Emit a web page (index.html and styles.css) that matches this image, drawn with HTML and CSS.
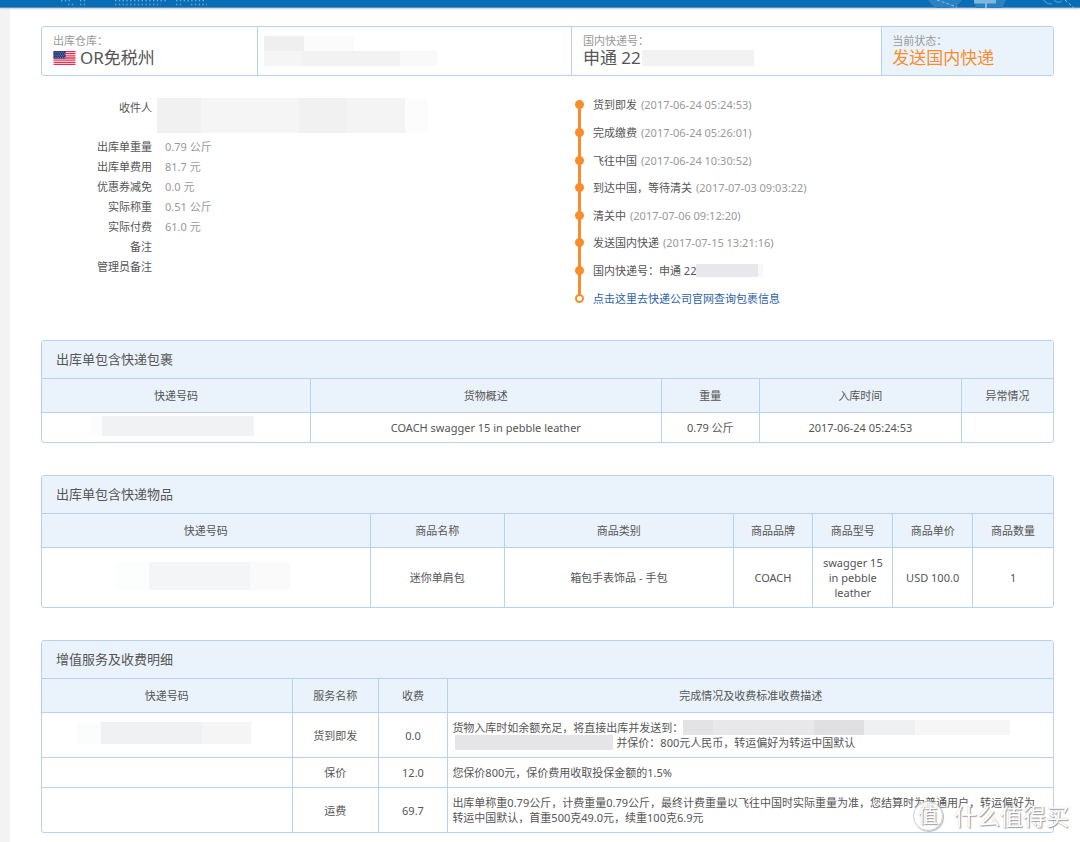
FILE: index.html
```html
<!DOCTYPE html>
<html lang="zh-CN">
<head>
<meta charset="utf-8">
<meta name="viewport" content="width=device-width, initial-scale=1">
<title>出库单详情</title>
<link rel="stylesheet" href="styles.css">
</head>
<body>
<header class="topbar">
  <svg class="topbar-dots" viewBox="0 0 160 8" aria-hidden="true">
    <g fill="none" stroke="#5fa6d8" stroke-width="1.4" stroke-dasharray="1.4 2.4">
      <path d="M1 .8H12M20 .8H26M55 .8H106M116 .8H145M8 4.5H15M20 4.5H26M55 4.5H101M116 4.5H122M131 4.5H147"/>
    </g>
  </svg>
  <svg class="topbar-map" viewBox="0 0 160 8" aria-hidden="true">
    <path fill="#2a82c2" d="M8 0H42L37 6 28 8H16L11 4ZM54 0H86L82 8H56Z"/>
    <path fill="#7db7e0" d="M54 0H76V3.500H67V8H65V3.500H54Z"/>
    <path fill="none" stroke="#8fc0e4" stroke-width="1" stroke-dasharray="3 2" d="M17 0 37 7M145 0 154 8"/>
    <path fill="none" stroke="#3f90ca" stroke-width="1.500" d="M124 0Q126 4 132 4M134 0Q138 4 142 1"/>
  </svg>
</header>
<main class="page">
  <section class="summary">
    <div class="summary-cell">
      <span class="summary-label">出库仓库：</span>
      <strong class="summary-value">
        <svg class="flag" viewBox="0 0 22 14" aria-hidden="true">
          <path fill="#fff" d="M0 0H22V14H0Z"/>
          <path stroke="#e0304f" stroke-width="1.300" d="M0 .6H22M0 2.700H22M0 4.900H22M0 7H22M0 9.200H22M0 11.300H22M0 13.400H22"/>
          <path fill="#20387c" d="M0 0H12V7.500H0Z"/>
          <path stroke="#b9c3de" stroke-width=".8" stroke-dasharray=".8 1.400" d="M1 1.200H12M2 3H12M1 4.800H12M2 6.500H12"/>
        </svg>OR免税州
      </strong>
    </div>
    <div class="summary-cell summary-masked">
      <span class="mask mask-user"></span>
      <span class="mask mask-mail"></span>
    </div>
    <div class="summary-cell">
      <span class="summary-label">国内快递号：</span>
      <strong class="summary-value">申通 22<span class="mask mask-tracking"></span></strong>
    </div>
    <div class="summary-cell summary-status">
      <span class="summary-label">当前状态：</span>
      <strong class="summary-value">发送国内快递</strong>
    </div>
  </section>

  <section class="details">
    <dl class="facts">
      <dt class="receiver">收件人</dt><dd class="receiver"><span class="mask mask-receiver"></span></dd>
      <dt>出库单重量</dt><dd>0.79 公斤</dd>
      <dt>出库单费用</dt><dd>81.7 元</dd>
      <dt>优惠券减免</dt><dd>0.0 元</dd>
      <dt>实际称重</dt><dd>0.51 公斤</dd>
      <dt>实际付费</dt><dd>61.0 元</dd>
      <dt>备注</dt><dd></dd>
      <dt>管理员备注</dt><dd></dd>
    </dl>
    <ol class="timeline">
      <li>货到即发 <time>(2017-06-24 05:24:53)</time></li>
      <li>完成缴费 <time>(2017-06-24 05:26:01)</time></li>
      <li>飞往中国 <time>(2017-06-24 10:30:52)</time></li>
      <li>到达中国，等待清关 <time>(2017-07-03 09:03:22)</time></li>
      <li>清关中 <time>(2017-07-06 09:12:20)</time></li>
      <li>发送国内快递 <time>(2017-07-15 13:21:16)</time></li>
      <li>国内快递号：申通 22<span class="mask mask-step"></span></li>
      <li><a href="#">点击这里去快递公司官网查询包裹信息</a></li>
    </ol>
  </section>

  <section class="panel">
    <h2>出库单包含快递包裹</h2>
    <table class="parcels">
      <colgroup><col class="c-code"><col class="c-desc"><col class="c-weight"><col class="c-time"><col></colgroup>
      <thead><tr><th>快递号码</th><th>货物概述</th><th>重量</th><th>入库时间</th><th>异常情况</th></tr></thead>
      <tbody>
        <tr><td class="code"><span class="mask mask-parcel"></span></td><td>COACH swagger 15 in pebble leather</td><td>0.79 公斤</td><td>2017-06-24 05:24:53</td><td></td></tr>
      </tbody>
    </table>
  </section>

  <section class="panel">
    <h2>出库单包含快递物品</h2>
    <table class="items">
      <colgroup><col class="c-code"><col class="c-name"><col class="c-type"><col class="c-small"><col class="c-small"><col class="c-small"><col></colgroup>
      <thead><tr><th>快递号码</th><th>商品名称</th><th>商品类别</th><th>商品品牌</th><th>商品型号</th><th>商品单价</th><th>商品数量</th></tr></thead>
      <tbody>
        <tr><td class="code"><span class="mask mask-item"></span></td><td>迷你单肩包</td><td>箱包手表饰品 - 手包</td><td>COACH</td><td>swagger 15 in pebble leather</td><td>USD 100.0</td><td>1</td></tr>
      </tbody>
    </table>
  </section>

  <section class="panel">
    <h2>增值服务及收费明细</h2>
    <table class="services">
      <colgroup><col class="c-code"><col class="c-name"><col class="c-fee"><col></colgroup>
      <thead><tr><th>快递号码</th><th>服务名称</th><th>收费</th><th>完成情况及收费标准收费描述</th></tr></thead>
      <tbody>
        <tr><td class="code"><span class="mask mask-service"></span></td><td>货到即发</td><td>0.0</td><td class="note">货物入库时如余额充足，将直接出库并发送到：<span class="mask mask-address"></span><br><span class="mask mask-address-end"></span>并保价：800元人民币，转运偏好为转运中国默认</td></tr>
        <tr><td></td><td>保价</td><td>12.0</td><td class="note">您保价800元，保价费用收取投保金额的1.5%</td></tr>
        <tr><td></td><td>运费</td><td>69.7</td><td class="note">出库单称重0.79公斤，计费重量0.79公斤，最终计费重量以飞往中国时实际重量为准，您结算时为普通用户，转运偏好为转运中国默认，首重500克49.0元，续重100克6.9元</td></tr>
      </tbody>
    </table>
  </section>
  <div class="watermark"><span class="watermark-badge">值</span><span>什么值得买</span></div>
</main>
</body>
</html>
```

FILE: styles.css
```css
*, *::before, *::after { box-sizing: border-box; }

body {
  margin: 0;
  min-height: 100vh;
  display: flex;
  flex-direction: column;
  background: #f3f3f3;
  color: #555;
  font: 11px/15px "Noto Sans", "Noto Sans CJK SC", sans-serif;
}

.topbar {
  display: flex;
  justify-content: space-between;
  height: 8px;
  padding-left: 60px;
  background: #096db6;
  border-bottom: 1px solid #5592bd;
  box-shadow: 0 1px 2px #ccc;
  z-index: 1;
}
.topbar svg { width: 160px; height: 8px; }

.page {
  position: relative;
  flex: 1;
  margin-left: 10px;
  padding: 18px 26px 9px 31px;
  background: #fff;
}

.mask { display: block; height: 18px; background: #f2f2f3; }

.summary {
  display: grid;
  grid-template-columns: 215fr 315fr 311fr 172fr;
  min-height: 50px;
  border: 1px solid #b5d3f0;
  border-radius: 3px;
}
.summary-cell {
  display: flex;
  flex-direction: column;
  padding: 7px 11px 4px;
}
.summary-cell + .summary-cell { border-left: 1px solid #b5d3f0; }
.summary-label { line-height: 14px; color: #999; }
.summary-value {
  display: flex;
  align-items: center;
  font-size: 17px;
  font-weight: 400;
  line-height: 20px;
}
.flag { width: 23px; height: 14px; margin-right: 4px; }
.summary-status { background: #eaf3fb; border-radius: 0 2px 2px 0; padding-left: 10px; }
.summary-status .summary-value { color: #fa8c2a; }
.summary .summary-masked { padding: 9px 6px; }
.mask-user { width: 90px; height: 15px; background: linear-gradient(90deg, #efefef 40px, #fbfbfb 40px); }
.mask-mail { width: 173px; height: 15px; background: linear-gradient(90deg, #f5f5f5 38px, #f2f2f2 38px 136px, #f9f9f9 136px); }
.mask-tracking { width: 112px; height: 16px; margin-left: 1px; background: #f2f2f2; }

.details {
  display: grid;
  grid-template-columns: 533fr 480fr;
  height: 221px;
  margin: 15px 0 28px;
}
.facts {
  display: grid;
  grid-template-columns: 111px 1fr;
  grid-template-rows: 39px;
  grid-auto-rows: 20px;
  align-content: start;
  column-gap: 13px;
  margin: 7px 0 0;
  line-height: 20px;
}
.facts dt { text-align: right; }
.facts dd { margin: 0; color: #999; }
.facts dd.receiver { margin-left: -8px; }
.mask-receiver {
  width: 271px;
  height: 35px;
  background: linear-gradient(90deg, #f1f1f1 44px, #f5f5f5 44px 142px, #f1f1f1 142px 190px, #f4f4f4 190px 248px, #fcfcfc 248px);
}

.timeline {
  display: grid;
  grid-auto-rows: 1fr;
  margin: 0;
  padding: 0;
  list-style: none;
}
.timeline li {
  position: relative;
  display: flex;
  align-items: center;
  gap: 4px;
  padding-left: 19px;
}
.timeline li::before {
  content: "";
  position: absolute;
  left: 1px;
  width: 9px;
  height: 9px;
  border: 2px solid #fa8c2a;
  border-radius: 50%;
  background: #fa8c2a;
  z-index: 1;
}
.timeline li:last-child::before { background: #fff; }
.timeline li:not(:last-child)::after {
  content: "";
  position: absolute;
  left: 4px;
  top: 50%;
  width: 3px;
  height: 100%;
  background: #fa8c2a;
}
.timeline time { color: #999; }
.timeline a { color: #2f62a5; text-decoration: none; }
.mask-step { width: 67px; height: 13px; margin-left: -4px; background: linear-gradient(90deg, #e8e8ec 62px, #f8f8f9 62px); }

.panel {
  margin-bottom: 32px;
  border: 1px solid #b5d3f0;
  border-radius: 3px;
  overflow: hidden;
}
.panel:last-of-type { margin-bottom: 0; }
.panel h2 {
  margin: 0;
  padding: 0 14px;
  background: #eaf3fb;
  font-size: 13px;
  font-weight: 400;
  line-height: 37px;
}
table {
  width: 100%;
  table-layout: fixed;
  border-collapse: separate;
  border-spacing: 0;
}
th, td {
  height: 30px;
  padding: 0 6px;
  border-top: 1px solid #b5d3f0;
  font-weight: 400;
  text-align: center;
}
th { height: 34px; background: #eaf3fb; }
th + th, td + td { border-left: 1px solid #b5d3f0; }
td .mask { margin: 0 auto; }
td.code { padding: 0 10px 4px 4px; }

.parcels .c-code { width: 26.5%; }
.parcels .c-desc { width: 34.7%; }
.parcels .c-weight { width: 9.7%; }
.parcels .c-time { width: 20%; }
.items .c-code { width: 32.4%; }
.items .c-name { width: 13.3%; }
.items .c-type { width: 22.6%; }
.items .c-small { width: 7.9%; }
.items td { height: 60px; }
.services .c-code { width: 24.7%; }
.services .c-name { width: 8.5%; }
.services .c-fee { width: 6.9%; }
.services .note { padding: 7px 14px 7px 4px; text-align: left; }

.mask-parcel { width: 163px; height: 20px; background: linear-gradient(90deg, #fbfcfd 11px, #f1f2f4 11px); }
.mask-item { width: 174px; height: 28px; background: linear-gradient(90deg, #fcfdfd 33px, #f4f5f6 33px 134px, #fafafb 134px); }
.mask-service { width: 174px; height: 22px; background: linear-gradient(90deg, #fbfcfc 24px, #f0f1f2 24px 125px, #f5f5f6 125px); }
.services .note .mask { display: inline-block; vertical-align: top; height: 15px; margin: 0; }
.services .mask-address { width: 327px; background: linear-gradient(90deg, #e3e3e5 30px, #e8e8ea 30px 131px, #e0e0e2 131px 181px, #eff0f1 181px 232px, #f6f6f7 232px); }
.services .note .mask-address-end { width: 158px; margin: 0 3px; background: #e5e5e8; }

.watermark {
  position: absolute;
  right: 11px;
  bottom: 10px;
  display: flex;
  align-items: center;
  gap: 11px;
  color: #fff;
  font-size: 23px;
  line-height: 32px;
  text-shadow: 1px 1px 1px #999, 0 0 1px #bbb;
}
.watermark-badge {
  width: 30px;
  height: 30px;
  border: 1px solid #ccc;
  border-radius: 50%;
  background: rgba(255, 255, 255, .8);
  box-shadow: 1px 1px 1px #bbb;
  font-size: 20px;
  line-height: 27px;
  text-align: center;
}
```
